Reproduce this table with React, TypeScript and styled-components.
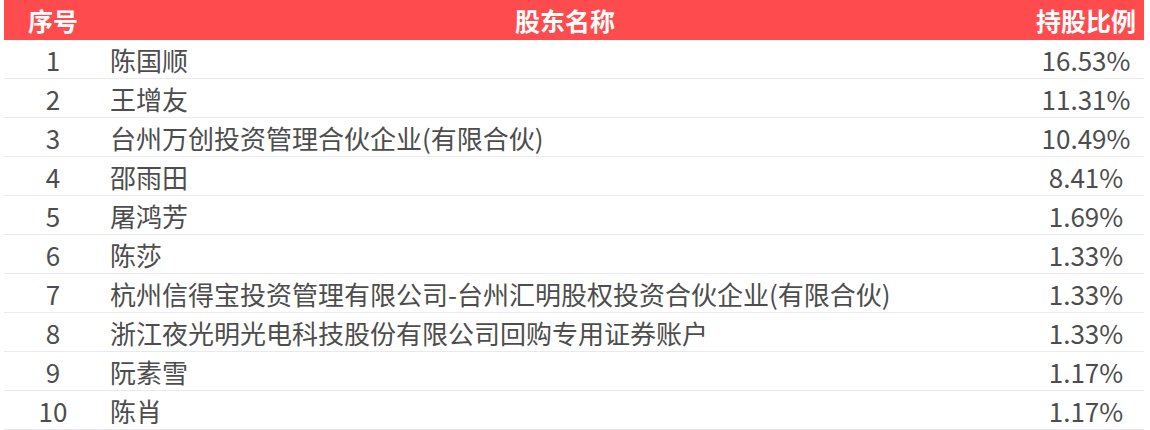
import React from "react";
import styled, { createGlobalStyle } from "styled-components";

interface Holder {
  rank: number;
  name: string;
  ratio: string;
}

const holders: Holder[] = [
  { rank: 1, name: "陈国顺", ratio: "16.53%" },
  { rank: 2, name: "王增友", ratio: "11.31%" },
  { rank: 3, name: "台州万创投资管理合伙企业(有限合伙)", ratio: "10.49%" },
  { rank: 4, name: "邵雨田", ratio: "8.41%" },
  { rank: 5, name: "屠鸿芳", ratio: "1.69%" },
  { rank: 6, name: "陈莎", ratio: "1.33%" },
  { rank: 7, name: "杭州信得宝投资管理有限公司-台州汇明股权投资合伙企业(有限合伙)", ratio: "1.33%" },
  { rank: 8, name: "浙江夜光明光电科技股份有限公司回购专用证券账户", ratio: "1.33%" },
  { rank: 9, name: "阮素雪", ratio: "1.17%" },
  { rank: 10, name: "陈肖", ratio: "1.17%" },
];

const GlobalStyle = createGlobalStyle`
  html, body {
    margin: 0;
    padding: 0;
    background: #ffffff;
  }
  body {
    font-family: "Noto Sans CJK SC", "Noto Sans", sans-serif;
  }
`;

const Wrap = styled.div`
  padding: 0 6px 0 4px;
`;

const Table = styled.div`
  display: grid;
  grid-template-columns: 98px 1fr 116px;
`;

const HeadCell = styled.div<{ align?: string }>`
  height: 40px;
  background: #fe4b4d;
  color: #ffffff;
  font-size: 25px;
  font-weight: 700;
  display: flex;
  align-items: center;
  justify-content: ${(p) => p.align || "center"};
  line-height: 1;
`;

const Cell = styled.div<{ align?: string }>`
  box-sizing: content-box;
  height: 37px;
  padding-top: 1px;
  border-bottom: 1px solid #e9e9ef;
  color: #4d4d4d;
  font-size: 26px;
  display: flex;
  align-items: center;
  justify-content: ${(p) => p.align || "center"};
  line-height: 1;
  white-space: nowrap;
`;

const NameCell = styled(Cell)`
  padding-left: 8px;
`;

function App() {
  return (
    <Wrap>
      <GlobalStyle />
      <Table>
        <HeadCell>序号</HeadCell>
        <HeadCell>股东名称</HeadCell>
        <HeadCell>持股比例</HeadCell>
        {holders.map((h) => (
          <React.Fragment key={h.rank}>
            <Cell>{h.rank}</Cell>
            <NameCell align="flex-start">{h.name}</NameCell>
            <Cell>{h.ratio}</Cell>
          </React.Fragment>
        ))}
      </Table>
    </Wrap>
  );
}

export default App;
